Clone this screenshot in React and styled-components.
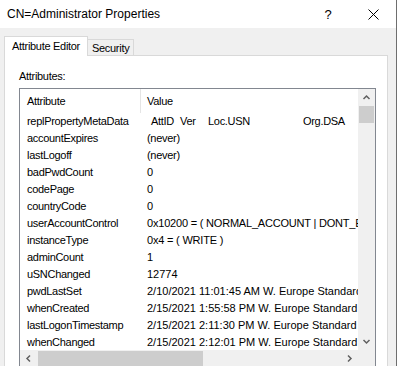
import React from "react";
import styled, { createGlobalStyle } from "styled-components";

const GlobalStyle = createGlobalStyle`
  html, body {
    margin: 0;
    padding: 0;
    background: #ffffff;
  }
  body {
    font-family: "Liberation Sans", Arial, sans-serif;
    color: #000;
  }
`;

const Window = styled.div`
  width: 397px;
  height: 366px;
  box-sizing: border-box;
  border-right: 1px solid #6e6e6e;
  background: #f0f0f0;
  display: flex;
  flex-direction: column;
  overflow: hidden;
`;

const TitleBar = styled.div`
  height: 28px;
  flex: none;
  background: #ffffff;
  display: flex;
  align-items: center;
  padding-left: 7px;
  font-size: 12px;
`;

const Title = styled.div`
  flex: 1;
`;

const CaptionButton = styled.div`
  width: ${(props) => props.width}px;
  height: 28px;
  display: flex;
  align-items: center;
  justify-content: center;
  font-size: 13px;
`;

const Body = styled.div`
  flex: 1;
  display: flex;
  flex-direction: column;
  padding: 8px 8px 0 4px;
  min-height: 0;
`;

const TabStrip = styled.div`
  height: 20px;
  display: flex;
  align-items: flex-end;
  margin-bottom: -1px;
  position: relative;
  z-index: 1;
`;

const Tab = styled.div`
  box-sizing: border-box;
  width: ${(props) => props.width}px;
  height: ${(props) => (props.active ? 20 : 17)}px;
  border: 1px solid #d9d9d9;
  border-bottom: ${(props) => (props.active ? "none" : "1px solid #d9d9d9")};
  border-left: ${(props) => (props.active ? "1px solid #d9d9d9" : "none")};
  background: ${(props) => (props.active ? "#ffffff" : "#f0f0f0")};
  padding-left: ${(props) => (props.active ? 7 : 4)}px;
  padding-bottom: ${(props) => (props.active ? 1 : 0)}px;
  display: flex;
  align-items: center;
  font-size: 11px;
  letter-spacing: -0.3px;
  white-space: nowrap;
`;

const Panel = styled.div`
  flex: 1;
  min-height: 0;
  background: #ffffff;
  border: 1px solid #d9d9d9;
  border-bottom: none;
  padding: 0 11px 0 14px;
  display: flex;
  flex-direction: column;
`;

const Label = styled.div`
  margin-top: 14px;
  margin-bottom: 5px;
  line-height: 13px;
  font-size: 11px;
  letter-spacing: -0.3px;
`;

const ListBox = styled.div`
  width: 357px;
  box-sizing: border-box;
  border: 1px solid #828790;
  display: grid;
  grid-template-columns: 1fr 17px;
  grid-template-rows: 261px 17px;
  flex: none;
`;

const ListContent = styled.div`
  overflow: hidden;
  font-size: 11px;
  letter-spacing: -0.3px;
`;

const HeaderRow = styled.div`
  height: 24px;
  display: grid;
  grid-template-columns: 121px 1fr;
  align-items: center;
`;

const HeaderCell = styled.div`
  height: 24px;
  line-height: 24px;
  padding-left: ${(props) => (props.first ? 7 : 6)}px;
  border-right: ${(props) => (props.first ? "1px solid #e5e5e5" : "none")};
  box-sizing: border-box;
`;

const Row = styled.div`
  height: 17px;
  line-height: 17px;
  display: grid;
  grid-template-columns: 121px 1fr;
  white-space: nowrap;
`;

const NameCell = styled.div`
  padding-left: 7px;
  overflow: hidden;
`;

const ValueCell = styled.div`
  padding-left: 6px;
  overflow: hidden;
  display: flex;
  letter-spacing: ${(props) => props.spacing ?? 0}px;
`;

const MetaCol = styled.span`
  display: inline-block;
  flex: none;
  width: ${(props) => props.width}px;
`;

const VScroll = styled.div`
  background: #f0f0f0;
  display: flex;
  flex-direction: column;
`;

const HScroll = styled.div`
  background: #f0f0f0;
  display: flex;
`;

const ArrowButton = styled.div`
  width: 17px;
  height: 17px;
  flex: none;
  display: flex;
  align-items: center;
  justify-content: center;
`;

const Thumb = styled.div`
  flex: none;
  background: #cdcdcd;
  ${(props) =>
    props.vertical
      ? `height: 17px; margin: 0 1px;`
      : `width: 165px; margin: 1px 0 1px 1px;`}
`;

const Track = styled.div`
  flex: 1;
`;

const Corner = styled.div`
  background: #f0f0f0;
`;

const Chevron = ({ dir }) => {
  const paths = {
    up: "M5.5 10 L8.5 7 L11.5 10",
    down: "M5.5 7 L8.5 10 L11.5 7",
    left: "M10 5.5 L7 8.5 L10 11.5",
    right: "M7 5.5 L10 8.5 L7 11.5",
  };
  return (
    <svg width="17" height="17" viewBox="0 0 17 17">
      <path d={paths[dir]} fill="none" stroke="#606060" strokeWidth="1.5" />
    </svg>
  );
};

// name, value, letter-spacing of the value
const rows = [
  ["accountExpires", "(never)", -0.3],
  ["lastLogoff", "(never)", -0.3],
  ["badPwdCount", "0"],
  ["codePage", "0"],
  ["countryCode", "0"],
  ["userAccountControl", "0x10200 = ( NORMAL_ACCOUNT | DONT_EXPIRE_PASSWORD )", -0.2],
  ["instanceType", "0x4 = ( WRITE )", -0.2],
  ["adminCount", "1"],
  ["uSNChanged", "12774"],
  ["pwdLastSet", "2/10/2021 11:01:45 AM W. Europe Standard Time"],
  ["whenCreated", "2/15/2021 1:55:58 PM W. Europe Standard Time"],
  ["lastLogonTimestamp", "2/15/2021 2:11:30 PM W. Europe Standard Time"],
  ["whenChanged", "2/15/2021 2:12:01 PM W. Europe Standard Time"],
];

const App = () => {
  return (
    <>
      <GlobalStyle />
      <Window>
        <TitleBar>
          <Title>CN=Administrator Properties</Title>
          <CaptionButton width={44}>?</CaptionButton>
          <CaptionButton width={46}>
            <svg width="11" height="11" viewBox="0 0 11 11">
              <path d="M0.5 0.5 L10.5 10.5 M10.5 0.5 L0.5 10.5" stroke="#000" strokeWidth="1" />
            </svg>
          </CaptionButton>
        </TitleBar>
        <Body>
          <TabStrip>
            <Tab active width={84}>Attribute Editor</Tab>
            <Tab width={46}>Security</Tab>
          </TabStrip>
          <Panel>
            <Label>Attributes:</Label>
            <ListBox>
              <ListContent>
                <HeaderRow>
                  <HeaderCell first>Attribute</HeaderCell>
                  <HeaderCell>Value</HeaderCell>
                </HeaderRow>
                <Row>
                  <NameCell>replPropertyMetaData</NameCell>
                  <ValueCell spacing={-0.3}>
                    <MetaCol width={4} />
                    <MetaCol width={29}>AttID</MetaCol>
                    <MetaCol width={28}>Ver</MetaCol>
                    <MetaCol width={95}>Loc.USN</MetaCol>
                    <MetaCol width={80}>Org.DSA</MetaCol>
                  </ValueCell>
                </Row>
                {rows.map(([name, value, spacing]) => (
                  <Row key={name}>
                    <NameCell>{name}</NameCell>
                    <ValueCell spacing={spacing}>{value}</ValueCell>
                  </Row>
                ))}
              </ListContent>
              <VScroll>
                <ArrowButton>
                  <Chevron dir="up" />
                </ArrowButton>
                <Thumb vertical />
                <Track />
                <ArrowButton>
                  <Chevron dir="down" />
                </ArrowButton>
              </VScroll>
              <HScroll>
                <ArrowButton>
                  <Chevron dir="left" />
                </ArrowButton>
                <Thumb />
                <Track />
                <ArrowButton>
                  <Chevron dir="right" />
                </ArrowButton>
              </HScroll>
              <Corner />
            </ListBox>
          </Panel>
        </Body>
      </Window>
    </>
  );
};

export default App;
